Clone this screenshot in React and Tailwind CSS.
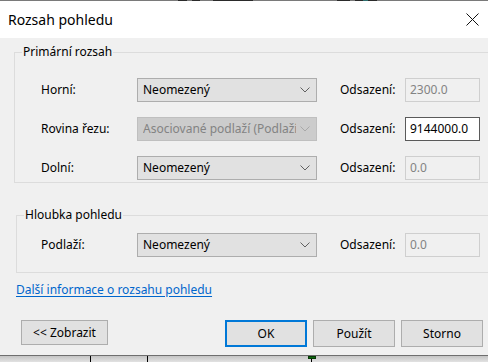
import React from 'react';

const font = { fontFamily: '"Noto Sans", "Open Sans", sans-serif' };

function Chevron({ disabled }) {
  return (
    <svg width="10" height="6" viewBox="0 0 10 6" className="shrink-0">
      <polyline points="0.5,0.5 5,5 9.5,0.5" fill="none" stroke={disabled ? '#a8a8a8' : '#606060'} strokeWidth="1" />
    </svg>
  );
}

function Select({ value, disabled }) {
  return (
    <div
      className={`w-[180px] h-[24px] flex items-center gap-[4px] pl-[5px] pr-[6px] border ${
        disabled ? 'bg-[#cccccc] border-[#bfbfbf] text-[#838383]' : 'bg-[#e1e1e1] border-[#adadad] text-black'
      }`}
    >
      <span className="flex-1 min-w-0 overflow-hidden whitespace-nowrap">{value}</span>
      <Chevron disabled={disabled} />
    </div>
  );
}

function Field({ value, enabled }) {
  return (
    <div
      className={`w-[75px] h-[24px] flex items-center pl-[4px] border ${
        enabled ? 'bg-white border-[#5a5a5a] text-black' : 'bg-[#f0f0f0] border-[#cfcfcf] text-[#838383]'
      }`}
    >
      {value}
    </div>
  );
}

function Row({ label, select, selectDisabled, offset, offsetEnabled }) {
  return (
    <div className="flex items-center h-[24px]">
      <span className="w-[96px]">{label}</span>
      <Select value={select} disabled={selectDisabled} />
      <span className="ml-[23px] w-[65px]">Odsazení:</span>
      <Field value={offset} enabled={offsetEnabled} />
    </div>
  );
}

export default function App() {
  return (
    <div className="w-[488px] h-[362px] overflow-hidden flex flex-col bg-[#f0f0f0] text-[12px] leading-[16px] text-black" style={font}>
      {/* window top edge */}
      <div className="h-px shrink-0 bg-[#7a7a7a] flex">
        <div className="ml-[178px] w-[9px] bg-[#2a2a2a]" />
        <div className="ml-[5px] w-[8px] bg-[#2a2a2a]" />
        <div className="ml-[13px] w-[40px] bg-[#2a2a2a]" />
        <div className="ml-[84px] w-[13px] bg-[#2a2a2a]" />
        <div className="ml-[5px] w-[8px] bg-[#2a2a2a]" />
        <div className="w-[5px] bg-[#2f6f6f]" />
        <div className="w-[9px] bg-[#2a2a2a]" />
      </div>

      {/* title bar */}
      <div className="h-[37px] shrink-0 bg-white flex items-center justify-between pl-[8px] pr-[9px]">
        <span className="text-[14px] leading-[20px]">Rozsah pohledu</span>
        <svg width="13" height="13" viewBox="0 0 13 13">
          <path d="M0.5 0.5 L12.5 12.5 M12.5 0.5 L0.5 12.5" stroke="#111" strokeWidth="1" />
        </svg>
      </div>

      {/* body */}
      <div className="flex-1 w-[506px] flex flex-col">
        <fieldset className="mt-[6px] ml-[14px] mr-[8px] border border-[#dcdcdc] pl-[7px] pt-[18px] pb-[2px]">
          <legend className="px-[1px] leading-[16px]">Primární rozsah</legend>
          <div className="pl-[19px] flex flex-col gap-[15px]">
            <Row label="Horní:" select="Neomezený" offset="2300.0" />
            <Row label="Rovina řezu:" select="Asociované podlaží (Podlaží 1)" selectDisabled offset="9144000.0" offsetEnabled />
            <Row label="Dolní:" select="Neomezený" offset="0.0" />
          </div>
        </fieldset>

        <fieldset className="mt-[24px] ml-[16px] mr-[8px] border border-[#dcdcdc] pl-[7px] pt-[10px] pb-[15px]">
          <legend className="px-[1px] leading-[16px]">Hloubka pohledu</legend>
          <div className="pl-[17px]">
            <Row label="Podlaží:" select="Neomezený" offset="0.0" />
          </div>
        </fieldset>

        <a href="#" className="mt-[9px] ml-[16px] self-start text-[#0066cc] underline underline-offset-[2px]">
          Další informace o rozsahu pohledu
        </a>

        <div className="mt-[22px] flex items-start">
          <button className="ml-[21px] w-[87px] h-[25px] bg-[#e1e1e1] border border-[#adadad]">&lt;&lt; Zobrazit</button>
          <button className="ml-[117px] w-[82px] h-[27px] bg-[#e1e1e1] border-2 border-[#0078d7]">OK</button>
          <button className="ml-[6px] w-[82px] h-[27px] bg-[#e1e1e1] border border-[#adadad]">Použít</button>
          <button className="ml-[6px] w-[82px] h-[27px] bg-[#e1e1e1] border border-[#adadad]">Storno</button>
        </div>
      </div>

      {/* background behind the dialog */}
      <div className="h-[7px] shrink-0 relative border-t border-[#6e6e6e] bg-gradient-to-b from-[#c4c4c4] to-[#e2e2e2]">
        <div className="absolute left-[90px] top-0 bottom-0 w-px bg-black" />
        <div className="absolute left-[147px] top-0 bottom-0 w-px bg-black" />
        <div className="absolute left-[308px] top-0 w-[8px] h-[3px] bg-[#0a6a0a] border border-[#063806]" />
        <div className="absolute left-[311px] top-[3px] bottom-0 w-px bg-black" />
      </div>
    </div>
  );
}
